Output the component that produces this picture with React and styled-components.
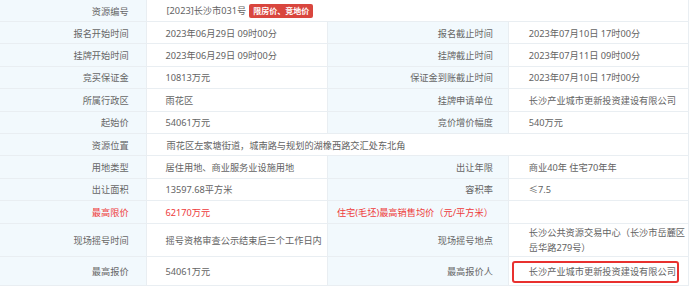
import React from "react";
import styled, { createGlobalStyle } from "styled-components";

const GlobalStyle = createGlobalStyle`
  html, body {
    margin: 0;
    padding: 0;
    background: #ffffff;
  }
  body {
    font-family: "Noto Sans", "Noto Sans CJK SC", sans-serif;
  }
`;

const rows = [
  { label: "报名开始时间", value: "2023年06月29日 09时00分", label2: "报名截止时间", value2: "2023年07月10日 17时00分" },
  { label: "挂牌开始时间", value: "2023年06月29日 09时00分", label2: "挂牌截止时间", value2: "2023年07月11日 09时00分" },
  { label: "竞买保证金", value: "10813万元", label2: "保证金到账截止时间", value2: "2023年07月10日 17时00分" },
  { label: "所属行政区", value: "雨花区", label2: "挂牌申请单位", value2: "长沙产业城市更新投资建设有限公司" },
  { label: "起始价", value: "54061万元", label2: "竞价增价幅度", value2: "540万元" },
  { label: "资源位置", value: "雨花区左家塘街道，城南路与规划的湖橡西路交汇处东北角", wide: true },
  { label: "用地类型", value: "居住用地、商业服务业设施用地", label2: "出让年限", value2: "商业40年 住宅70年年" },
  { label: "出让面积", value: "13597.68平方米", label2: "容积率", value2: "≤7.5" },
  { label: "最高限价", value: "62170万元", label2: "住宅(毛坯)最高销售均价（元/平方米）", value2: "", red: true },
];

export default function App() {
  return (
    <>
      <GlobalStyle />
      <Table>
        <colgroup>
          <col style={{ width: 146 }} />
          <col style={{ width: 181 }} />
          <col style={{ width: 181 }} />
          <col style={{ width: 180 }} />
        </colgroup>
        <tbody>
          <Row $h={22}>
            <Label>资源编号</Label>
            <Value colSpan={3}>
              [2023]长沙市031号
              <Badge>限房价、竞地价</Badge>
            </Value>
          </Row>
          {rows.map((r) =>
            r.wide ? (
              <Row $h={22.4} key={r.label}>
                <Label>{r.label}</Label>
                <Value colSpan={3}>{r.value}</Value>
              </Row>
            ) : (
              <Row $h={22.4} key={r.label}>
                <Label $red={r.red}>{r.label}</Label>
                <Value $red={r.red}>{r.value}</Value>
                <Label $red={r.red}>{r.label2}</Label>
                <Value>{r.value2}</Value>
              </Row>
            )
          )}
          <Row $h={33}>
            <Label>现场摇号时间</Label>
            <Value>摇号资格审查公示结束后三个工作日内</Value>
            <Label>现场摇号地点</Label>
            <Value $lines>
              长沙公共资源交易中心（长沙市岳麓区
              <br />
              岳华路279号）
            </Value>
          </Row>
          <Row $h={26}>
            <Label>最高报价</Label>
            <Value>54061万元</Value>
            <Label>最高报价人</Label>
            <BoxCell>
              <Highlight>长沙产业城市更新投资建设有限公司</Highlight>
            </BoxCell>
          </Row>
        </tbody>
      </Table>
    </>
  );
}

const Table = styled.table`
  width: 689px;
  table-layout: fixed;
  border-collapse: collapse;
  font-size: 9.2px;
  color: #636363;
  margin-top: -1px;
`;

const Row = styled.tr`
  td {
    height: ${(p) => p.$h - 1}px;
    border-top: 1px solid #e9eef2;
    border-bottom: 1px solid #e9eef2;
    border-right: 1px solid #e9eef2;
  }
`;

const Label = styled.td`
  background: #f2f9fd;
  text-align: right;
  padding: 0 15px 0 2px;
  white-space: nowrap;
  color: ${(p) => (p.$red ? "#ee3b3b" : "#666666")};
  &:first-child {
    padding-right: 17px;
  }
`;

const Value = styled.td`
  background: #ffffff;
  text-align: left;
  padding: 0 6px 0 19px;
  white-space: nowrap;
  line-height: ${(p) => (p.$lines ? "15px" : "normal")};
  color: ${(p) => (p.$red ? "#ee3b3b" : "#636363")};
  &:last-child {
    padding-left: 20px;
  }
`;

const BoxCell = styled.td`
  background: #ffffff;
  padding: 3px 9px 0 3px;
  vertical-align: middle;
`;

const Highlight = styled.div`
  border: 2px solid #e8312f;
  border-radius: 3px;
  height: 18px;
  line-height: 18px;
  padding-left: 15px;
  white-space: nowrap;
  color: #636363;
`;

const Badge = styled.span`
  display: inline-block;
  margin-left: 3px;
  padding: 0 4px;
  height: 14px;
  line-height: 14px;
  background: #d9463e;
  color: #ffffff;
  font-size: 8px;
  font-weight: bold;
  border-radius: 2px;
  vertical-align: middle;
`;
